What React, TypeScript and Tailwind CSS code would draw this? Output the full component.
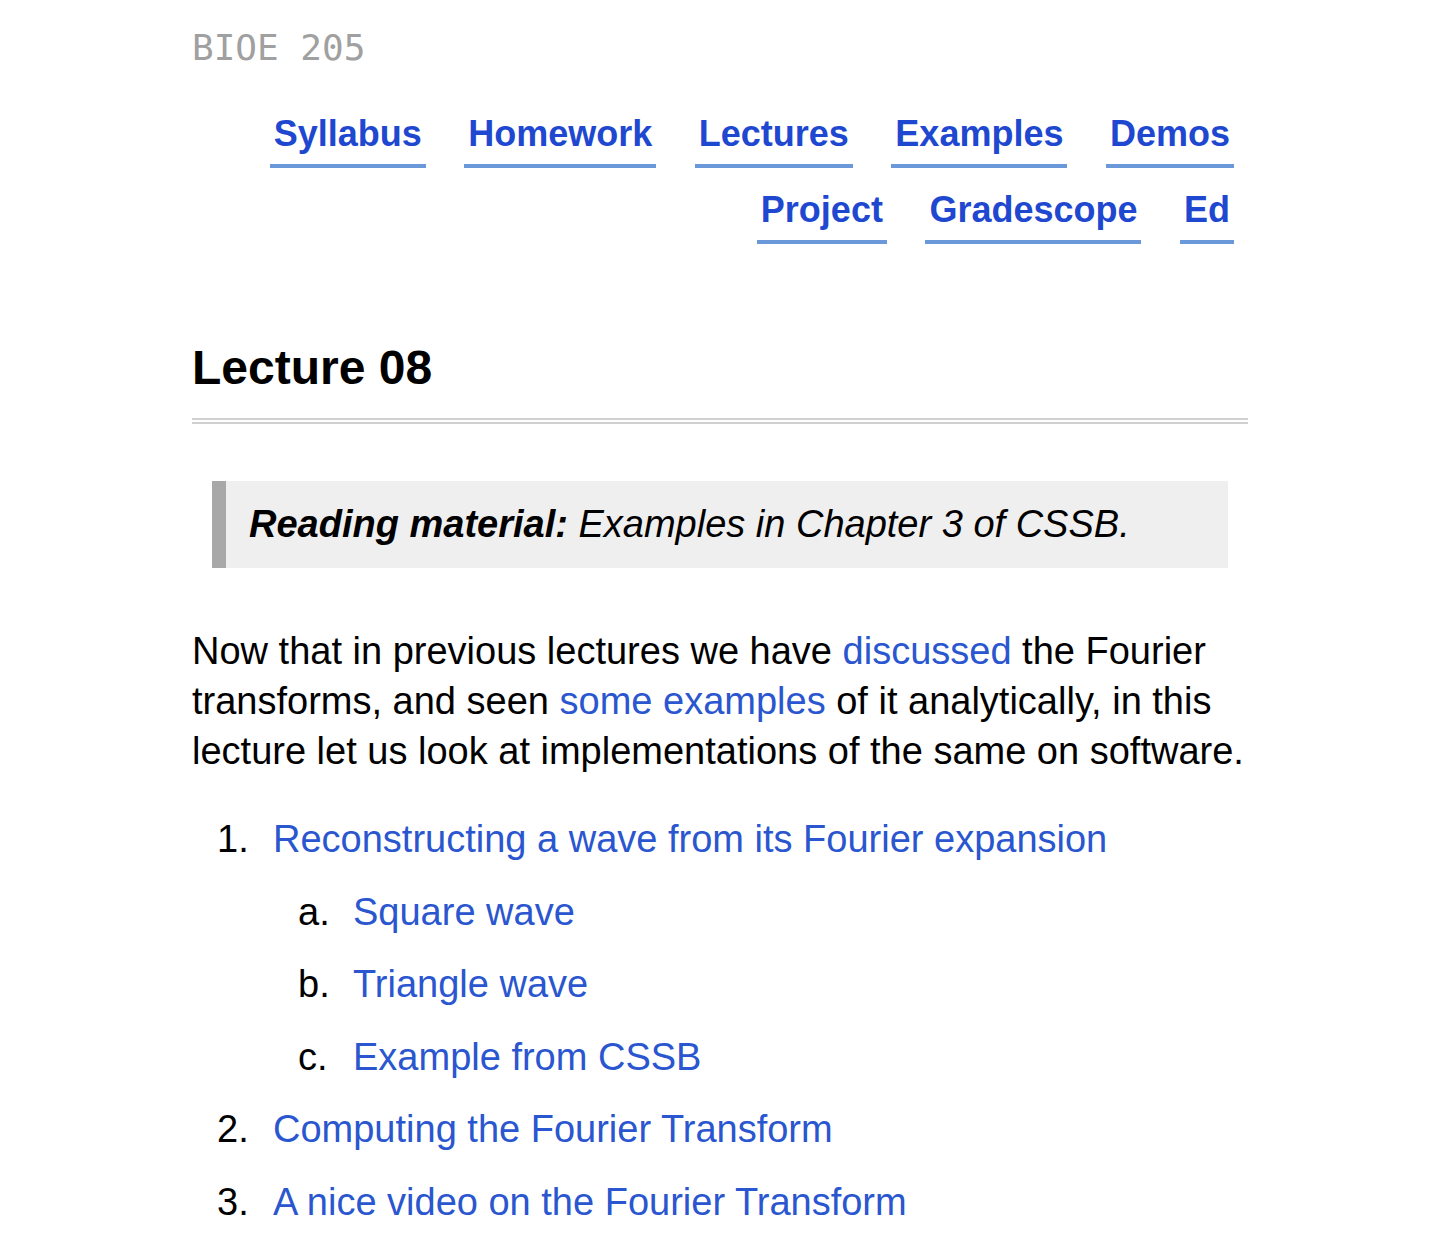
const NAV_LINKS = [
  "Syllabus",
  "Homework",
  "Lectures",
  "Examples",
  "Demos",
  "Project",
  "Gradescope",
  "Ed",
];

const SUB_ITEMS = [
  { mark: "a.", label: "Square wave" },
  { mark: "b.", label: "Triangle wave" },
  { mark: "c.", label: "Example from CSSB" },
];

const sans = "font-['Liberation_Sans',Helvetica,Arial,sans-serif]";

function ListRow({ mark, children }: { mark: string; children: React.ReactNode }) {
  return (
    <div className="flex">
      <span className="w-[56px] flex-none text-black">{mark}</span>
      <div className="min-w-0 flex-1">{children}</div>
    </div>
  );
}

export default function App() {
  return (
    <div className={`min-h-screen bg-white ${sans}`}>
      <div className="mx-auto w-[1056px]">
        {/* site title */}
        <div className="pt-[30px] font-['DejaVu_Sans_Mono',Menlo,monospace] text-[36px] leading-[36px] text-[#a0a0a0]">
          BIOE 205
        </div>

        <nav className="mt-[48px] flex flex-wrap justify-end gap-x-[38.5px] gap-y-[22px] pr-[14px]">
          {NAV_LINKS.map((name) => (
            <a
              key={name}
              href="#"
              className="border-b-4 border-[#6a98d9] px-1 pb-[10px] text-[36px] font-bold leading-[40px] text-[#1f48d0]"
            >
              {name}
            </a>
          ))}
        </nav>

        <h1 className="mt-[97px] border-b-[6px] border-double border-[#d0d0d0] pb-[23px] text-[48px] font-bold leading-[54px] text-black">
          Lecture 08
        </h1>

        <blockquote className="mx-[20px] mt-[57px] border-l-[14px] border-[#a8a8a8] bg-[#efefef] py-[19px] pl-[23px] text-[38px] italic leading-[49px] text-black">
          <strong className="font-bold">Reading material:</strong> Examples in Chapter 3 of CSSB.
        </blockquote>

        <p className="mt-[58px] text-[38px] leading-[50px] text-black">
          Now that in previous lectures we have{" "}
          <a href="#" className="text-[#2a56cf]">
            discussed
          </a>{" "}
          the Fourier transforms, and seen{" "}
          <a href="#" className="text-[#2a56cf]">
            some examples
          </a>{" "}
          of it analytically, in this lecture let us look at implementations of the same on software.
        </p>

        <div className="mt-[27px] pl-[25px] text-[38px] leading-[72.6px] text-[#2a56cf]">
          <ListRow mark="1.">
            <a href="#">Reconstructing a wave from its Fourier expansion</a>
            <div className="pl-[25px]">
              {SUB_ITEMS.map((it) => (
                <div key={it.mark} className="flex">
                  <span className="w-[55px] flex-none text-black">{it.mark}</span>
                  <a href="#">{it.label}</a>
                </div>
              ))}
            </div>
          </ListRow>
          <ListRow mark="2.">
            <a href="#">Computing the Fourier Transform</a>
          </ListRow>
          <ListRow mark="3.">
            <a href="#">A nice video on the Fourier Transform</a>
          </ListRow>
        </div>
      </div>
    </div>
  );
}
